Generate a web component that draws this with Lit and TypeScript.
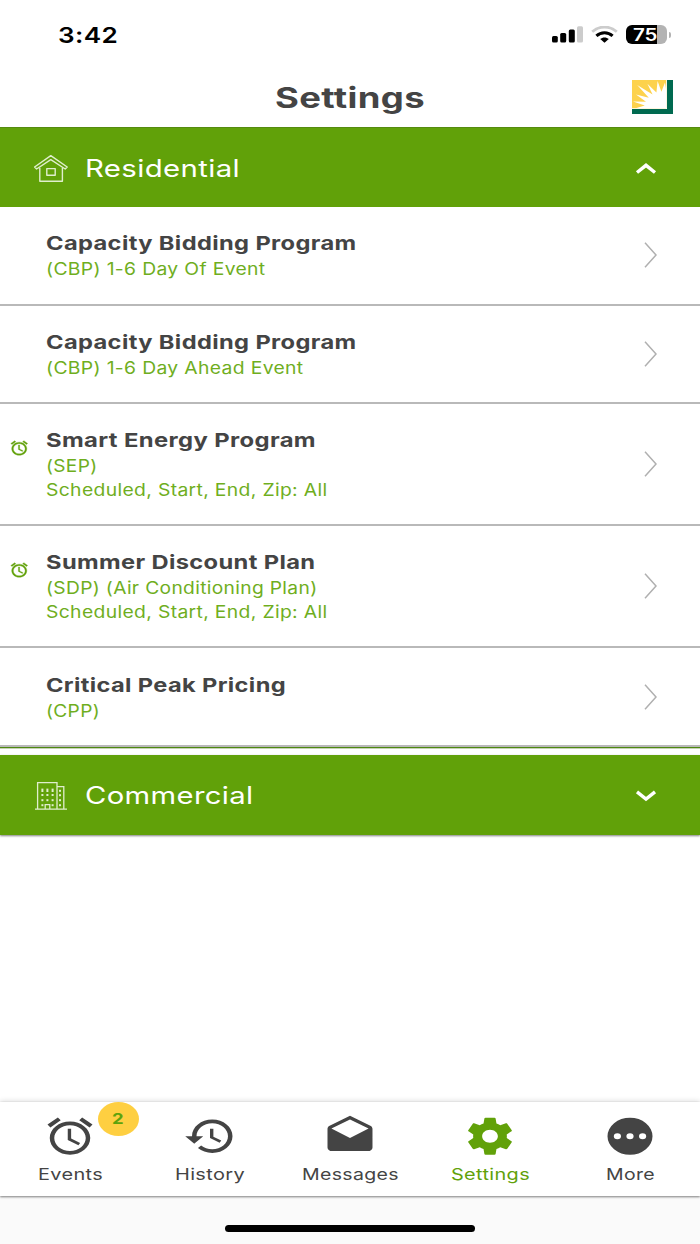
import { LitElement, html, svg, css, nothing } from "lit";
import { customElement, property, query } from "lit/decorators.js";
import { styleMap } from "lit/directives/style-map.js";

/** A single line of text stretched horizontally to an exact width. */
@customElement("fit-text")
class FitText extends LitElement {
  @property({ type: Number }) width = 100;
  @property() text = "";
  @property({ type: Number }) ratio = 1;
  @query(".t") inner!: HTMLElement;
  static styles = css`
    :host { display: inline-block; white-space: nowrap; text-align: left; }
    .box { display: block; }
    .t { display: inline-block; transform-origin: 0 50%; }
  `;
  render() {
    return html`<span class="box" style=${styleMap({ width: this.width + "px" })}><span class="t" style=${styleMap({ transform: `scaleX(${this.ratio})` })}>${this.text}</span></span>`;
  }
  updated() {
    const natural = this.inner.getBoundingClientRect().width / this.ratio;
    const next = this.width / natural;
    if (natural > 0 && Math.abs(next - this.ratio) > 0.002) this.ratio = next;
  }
}

const ALARM = "M22 5.72l-4.6-3.86-1.29 1.53 4.6 3.86L22 5.72zM7.88 3.39L6.6 1.86 2 5.71l1.29 1.53 4.59-3.85zM12.5 8H11v6l4.75 2.85.75-1.23-4-2.37V8zM12 4c-4.97 0-9 4.03-9 9s4.02 9 9 9c4.97 0 9-4.03 9-9s-4.03-9-9-9zm0 16c-3.87 0-7-3.13-7-7s3.13-7 7-7 7 3.13 7 7-3.13 7-7 7z";
const HISTORY = "M13 3c-4.97 0-9 4.03-9 9H1l3.89 3.89.07.14L9 12H6c0-3.87 3.13-7 7-7s7 3.13 7 7-3.13 7-7 7c-1.93 0-3.68-.79-4.94-2.06l-1.42 1.42C8.27 19.99 10.51 21 13 21c4.97 0 9-4.03 9-9s-4.03-9-9-9zm-1 5v5l4.28 2.54.72-1.21-3.5-2.08V8H12z";
const DRAFTS = "M21.99 8c0-.72-.37-1.35-.94-1.7L12 1 2.95 6.3C2.38 6.65 2 7.28 2 8v10c0 1.1.9 2 2 2h16c1.1 0 2-.9 2-2l-.01-10zM12 13L3.74 7.84 12 3l8.26 4.84L12 13z";
const GEAR = "M19.43 12.98c.04-.32.07-.64.07-.98s-.03-.66-.07-.98l2.11-1.65c.19-.15.24-.42.12-.64l-2-3.46c-.12-.22-.39-.3-.61-.22l-2.49 1c-.52-.4-1.08-.73-1.69-.98l-.38-2.65C14.46 2.18 14.25 2 14 2h-4c-.25 0-.46.18-.49.42l-.38 2.65c-.61.25-1.17.59-1.69.98l-2.49-1c-.23-.09-.49 0-.61.22l-2 3.46c-.13.22-.07.49.12.64l2.11 1.65c-.04.32-.07.65-.07.98s.03.66.07.98l-2.11 1.65c-.19.15-.24.42-.12.64l2 3.46c.12.22.39.3.61.22l2.49-1c.52.4 1.08.73 1.69.98l.38 2.65c.03.24.24.42.49.42h4c.25 0 .46-.18.49-.42l.38-2.65c.61-.25 1.17-.59 1.69-.98l2.49 1c.23.09.49 0 .61-.22l2-3.46c.12-.22.07-.49-.12-.64l-2.11-1.65zM12 15.5c-1.93 0-3.5-1.57-3.5-3.5s1.57-3.5 3.5-3.5 3.5 1.57 3.5 3.5-1.57 3.5-3.5 3.5z";
const MORE = "M12 2a10 10 0 1 0 0 20a10 10 0 1 0 0-20zM6.4 10.4a1.6 1.6 0 1 1 0 3.2a1.6 1.6 0 1 1 0-3.2zM12 10.4a1.6 1.6 0 1 1 0 3.2a1.6 1.6 0 1 1 0-3.2zM17.6 10.4a1.6 1.6 0 1 1 0 3.2a1.6 1.6 0 1 1 0-3.2z";

interface Line { text: string; width: number }
interface Program { title: Line; subs: Line[]; alarm?: boolean }

const PROGRAMS: Program[] = [
  { title: { text: "Capacity Bidding Program", width: 310.5 }, subs: [{ text: "(CBP) 1-6 Day Of Event", width: 219.5 }] },
  { title: { text: "Capacity Bidding Program", width: 310.5 }, subs: [{ text: "(CBP) 1-6 Day Ahead Event", width: 257.5 }] },
  { title: { text: "Smart Energy Program", width: 270 }, alarm: true,
    subs: [{ text: "(SEP)", width: 51.5 }, { text: "Scheduled, Start, End, Zip: All", width: 281.5 }] },
  { title: { text: "Summer Discount Plan", width: 269.5 }, alarm: true,
    subs: [{ text: "(SDP) (Air Conditioning Plan)", width: 271.5 }, { text: "Scheduled, Start, End, Zip: All", width: 281.5 }] },
  { title: { text: "Critical Peak Pricing", width: 240 }, subs: [{ text: "(CPP)", width: 54 }] },
];

const TABS = [
  { label: "Events", width: 65, icon: ALARM, badge: "2" },
  { label: "History", width: 70, icon: HISTORY },
  { label: "Messages", width: 97, icon: DRAFTS },
  { label: "Settings", width: 79, icon: GEAR, active: true },
  { label: "More", width: 49, icon: MORE },
];

@customElement("app-root")
class AppRoot extends LitElement {
  static styles = css`
    :host { display: flex; flex-direction: column; width: 700px; height: 1244px; overflow: hidden; background: #fff; color: #444; font-family: Inter, "Liberation Sans", sans-serif; letter-spacing: 0.3px; }
    * { box-sizing: border-box; }
    svg { display: block; flex: none; }
    .status { height: 68px; flex: none; display: flex; justify-content: space-between; align-items: center; padding: 0 29px 0 58px; color: #000; }
    .time { font-size: 22px; font-weight: 600; line-height: 28px; padding-top: 1px; }
    .indicators { display: flex; align-items: center; gap: 7.5px; padding-top: 1px; }
    .battery { display: flex; align-items: center; gap: 2px; }
    .cell { width: 41px; height: 19px; border-radius: 6px; background: linear-gradient(90deg, #000 31px, #b3b3b3 31px); color: #fff; font-size: 17px; font-weight: 600; line-height: 20px; padding-left: 7px; letter-spacing: 0; }
    .nub { width: 2.5px; height: 6px; border-radius: 0 3px 3px 0; background: #b3b3b3; }
    .header { height: 59px; flex: none; display: grid; grid-template-columns: 1fr auto 1fr; align-items: center; padding: 0 27px; }
    .title { grid-column: 2; font-size: 28px; font-weight: 700; line-height: 34px; height: 34px; }
    .logo { justify-self: end; margin-bottom: 1px; }
    .section { flex: none; height: 80px; display: flex; align-items: center; background: #61a109; color: #fff; padding: 2px 43px 0 33px; border-top: 1px solid #558b10; }
    .section.second { height: 80px; margin-top: 6px; border-top: 0; box-shadow: 0 1px 2px rgba(0,0,0,.5); }
    .name { flex: 1; padding-left: 16px; font-size: 24px; line-height: 32px; }
    .row { flex: none; height: 98px; display: flex; align-items: center; border-bottom: 2px solid #b9b9b9; padding-right: 43px; }
    .row.tall { height: 122px; }
    .row.odd { height: 99px; }
    .row.first { padding-bottom: 1px; }
    .mark { width: 46px; padding-left: 9.5px; align-self: flex-start; padding-top: 36px; color: #61a109; }
    .texts { flex: 1; display: flex; flex-direction: column; align-items: flex-start; }
    .head { font-size: 19.3px; font-weight: 700; line-height: 28px; height: 28px; }
    .sub { font-size: 17px; line-height: 24px; height: 24px; color: #6fae1e; }
    .rule { flex: none; height: 2px; background: #4f8812; border-bottom: 1px solid #c5d3b4; }
    .space { flex: 1; }
    .tabs { position: relative; z-index: 1; flex: none; height: 94px; display: grid; grid-template-columns: repeat(5, 1fr); background: #fff; box-shadow: 0 -1px 5px rgba(0,0,0,.14), 0 1px 2px rgba(0,0,0,.45); }
    .tab { position: relative; display: flex; flex-direction: column; align-items: center; padding-top: 11.5px; font-size: 16.4px; }
    .tab.active { color: #61a109; }
    .label { line-height: 24px; height: 24px; margin-top: 4px; }
    .badge { position: absolute; left: 98px; top: 0; width: 41px; height: 34px; border-radius: 50%; background: #fecf41; color: #5da30c; font-weight: 700; font-size: 15px; line-height: 33px; display: flex; justify-content: center; padding-right: 2px; }
    .home { flex: none; height: 48px; background: #fafafa; display: flex; justify-content: center; padding-top: 29.4px; }
    .pill { width: 250px; height: 7px; border-radius: 4px; background: #000; }
  `;

  private caret(up: boolean) {
    return html`<svg width="22" height="14" viewBox="0 0 22 14" fill="none" stroke="#fff" stroke-width="3.4"><path d=${up ? "M2 10.5L11 3.3L20 10.5" : "M2 2.8L11 10L20 2.8"}/></svg>`;
  }

  private house() {
    return html`<svg width="36" height="30" viewBox="0 0 36 30" fill="none" stroke="#e0eecd" stroke-width="1.4" stroke-linejoin="round">
      <path d="M1.6 13L17.8 1.6L34.2 13L32.2 15L17.8 5.6L3.6 15Z"/><path d="M6.8 13.8V27.2H29.4V13.8"/><rect x="13.8" y="14.6" width="8.4" height="6.6"/></svg>`;
  }

  private building() {
    const dots = [];
    for (const y of [7.6, 13, 18.2, 23.2]) for (const x of [8.4, 13.4, 18.6]) if (!(y > 23 && x === 13.4)) dots.push(svg`<rect x=${x} y=${y} width="2" height=${y < 8 ? 3.4 : 2}/>`);
    for (const y of [8.8, 13.2, 18.2, 23.2]) dots.push(svg`<rect x="26" y=${y} width="2" height="2"/>`);
    return html`<svg width="36" height="30" viewBox="0 0 36 30" fill="none" stroke="#e0eecd" stroke-width="1.3">
      <path d="M4.6 28V1.6H24V28M24 5.6H30.8V28M2 28.2H34"/><path d="M12.2 28V23.6H16.8V28"/><g fill="#e0eecd" stroke="none">${dots}</g></svg>`;
  }

  private logo() {
    return html`<svg class="logo" width="41" height="34" viewBox="0 0 41 34">
      <path d="M0 0H41V34H0Z" fill="#006a50"/><path d="M0 0H35V29H0Z" fill="#fff"/><path d="M0 0H34.2V28.2H0Z" fill="#fdd24d"/>
      <path d="M34.2 28.2H3.6L12.8 25.6L1 21.4L14 21.8L4 14.6L16.8 17.8L5.2 5L20.6 14.6L15.4 3.8L24.4 12.4L25.6 1L29.4 11.8L33 2.4L34.2 10Z" fill="#fff"/></svg>`;
  }

  render() {
    return html`
      <div class="status">
        <fit-text class="time" text="3:42" .width=${60}></fit-text>
        <div class="indicators">
          <svg width="32" height="17" viewBox="0 0 32 17"><rect x="0" y="10" width="5.8" height="6.4" rx="1.5"/><rect x="8.2" y="7" width="6" height="9.4" rx="1.5"/><rect x="16.8" y="3.6" width="6" height="12.8" rx="1.5"/><rect x="25" y="0.3" width="6" height="16.1" rx="1.5" fill="#ccc"/></svg>
          <svg width="27" height="17" viewBox="0 0 27 17" fill="none"><path d="M1.2 5.7C8 -.5 19 -.5 25.8 5.7" stroke="#ccc" stroke-width="2.8"/><path d="M5.4 9.8C10 5.6 17 5.6 21.6 9.8" stroke="#000" stroke-width="3"/><path d="M9.2 13C11.5 10.9 15.5 10.9 17.8 13L13.5 16.8Z" fill="#000"/></svg>
          <div class="battery"><div class="cell"><fit-text text="75" .width=${24.5}></fit-text></div><div class="nub"></div></div>
        </div>
      </div>
      <div class="header"><fit-text class="title" text="Settings" .width=${150}></fit-text>${this.logo()}</div>
      <div class="section">${this.house()}<div class="name"><fit-text text="Residential" .width=${155}></fit-text></div>${this.caret(true)}</div>
      ${PROGRAMS.map((p, i) => html`
        <div class="row ${p.subs.length > 1 ? "tall" : ""} ${i === 0 || i === 4 ? "odd" : ""} ${i === 0 ? "first" : ""}">
          <div class="mark">${p.alarm ? html`<svg width="18.5" height="16" viewBox="1 1 22 22" preserveAspectRatio="none" fill="currentColor" stroke="currentColor" stroke-width=".4"><path d=${ALARM}/></svg>` : nothing}</div>
          <div class="texts"><fit-text class="head" .text=${p.title.text} .width=${p.title.width}></fit-text>
            ${p.subs.map((s) => html`<fit-text class="sub" .text=${s.text} .width=${s.width}></fit-text>`)}</div>
          <svg width="14" height="26" viewBox="0 0 14 26" fill="none" stroke="#b0b0b0" stroke-width="1.5"><path d="M2 .8L13 13L2 25.2"/></svg>
        </div>`)}
      <div class="rule"></div>
      <div class="section second">${this.building()}<div class="name"><fit-text text="Commercial" .width=${168.5}></fit-text></div>${this.caret(false)}</div>
      <div class="space"></div>
      <div class="tabs">
        ${TABS.map((t) => html`<div class="tab ${t.active ? "active" : ""}">
          <svg width="54" height="44.5" viewBox="0 0 24 24" preserveAspectRatio="none" fill="currentColor" fill-rule="evenodd"><path d=${t.icon}/></svg>
          <fit-text class="label" .text=${t.label} .width=${t.width}></fit-text>
          ${t.badge ? html`<div class="badge"><fit-text .text=${t.badge} .width=${12}></fit-text></div>` : nothing}
        </div>`)}
      </div>
      <div class="home"><div class="pill"></div></div>`;
  }
}
